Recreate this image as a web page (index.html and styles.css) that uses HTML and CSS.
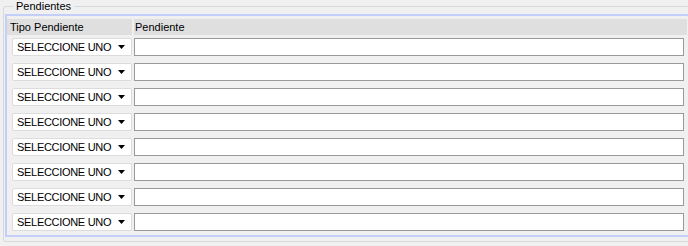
FILE: index.html
```html
<!doctype html>
<html lang="es">
    <head>
        <meta charset="UTF-8" />
        <title>Pendientes</title>
        <link rel="stylesheet" href="styles.css">
    </head>
    <body>
        <fieldset class="group">
            <legend>Pendientes</legend>
            <div class="panel">
                <div class="grid">
                    <div class="head">Tipo Pendiente</div>
                    <div class="head head-last">Pendiente</div>

                    <div class="select"><span>SELECCIONE UNO</span><svg width="7" height="4" viewBox="0 0 7 4"><path d="M0 0h7L3.5 4z" fill="#000"/></svg></div>
                    <input class="text" type="text">

                    <div class="select"><span>SELECCIONE UNO</span><svg width="7" height="4" viewBox="0 0 7 4"><path d="M0 0h7L3.5 4z" fill="#000"/></svg></div>
                    <input class="text" type="text">

                    <div class="select"><span>SELECCIONE UNO</span><svg width="7" height="4" viewBox="0 0 7 4"><path d="M0 0h7L3.5 4z" fill="#000"/></svg></div>
                    <input class="text" type="text">

                    <div class="select"><span>SELECCIONE UNO</span><svg width="7" height="4" viewBox="0 0 7 4"><path d="M0 0h7L3.5 4z" fill="#000"/></svg></div>
                    <input class="text" type="text">

                    <div class="select"><span>SELECCIONE UNO</span><svg width="7" height="4" viewBox="0 0 7 4"><path d="M0 0h7L3.5 4z" fill="#000"/></svg></div>
                    <input class="text" type="text">

                    <div class="select"><span>SELECCIONE UNO</span><svg width="7" height="4" viewBox="0 0 7 4"><path d="M0 0h7L3.5 4z" fill="#000"/></svg></div>
                    <input class="text" type="text">

                    <div class="select"><span>SELECCIONE UNO</span><svg width="7" height="4" viewBox="0 0 7 4"><path d="M0 0h7L3.5 4z" fill="#000"/></svg></div>
                    <input class="text" type="text">

                    <div class="select"><span>SELECCIONE UNO</span><svg width="7" height="4" viewBox="0 0 7 4"><path d="M0 0h7L3.5 4z" fill="#000"/></svg></div>
                    <input class="text" type="text">
                </div>
            </div>
        </fieldset>
    </body>
</html>
```

FILE: styles.css
```css
* {
    margin: 0;
    padding: 0;
    box-sizing: border-box;
}
body {
    font-family: "Liberation Sans", Arial, sans-serif;
    font-size: 11px;
    background-color: #f0f0f0;
    color: #000;
    width: 688px;
    height: 246px;
    overflow: hidden;
}
.group {
    margin-left: 3px;
    width: 700px;
    height: 242px;
    border: 1px solid #d5d9dc;
    border-radius: 3px;
    padding: 0 0 0 1px;
}
.group legend {
    margin-left: 8px;
    padding: 0 3px;
    line-height: 13px;
    color: #000;
}
.panel {
    margin-top: 1px;
    border: 2px solid #c3cffa;
    border-right: none;
    height: 223px;
    padding: 3px 0 0 0;
}
.grid {
    display: grid;
    grid-template-columns: 125px 1fr;
    column-gap: 2px;
    row-gap: 7px;
    width: 680px;
}
.head {
    background-color: #dfdfdf;
    height: 16px;
    line-height: 16px;
    padding-left: 3px;
    margin-bottom: -4px;
}
.head-last {
    padding-left: 1px;
}
.select {
    margin-left: 5px;
    width: 120px;
    height: 18px;
    background-color: #fff;
    border: 1px solid #dcdcdc;
    border-radius: 2px;
    display: flex;
    align-items: center;
    justify-content: space-between;
    padding: 0 6px 0 4px;
    font-size: 11px;
    letter-spacing: -0.3px;
}
.select svg {
    display: block;
}
.text {
    width: 550px;
    height: 18px;
    background-color: #fff;
    border: 1px solid #999;
    outline: none;
}
```
